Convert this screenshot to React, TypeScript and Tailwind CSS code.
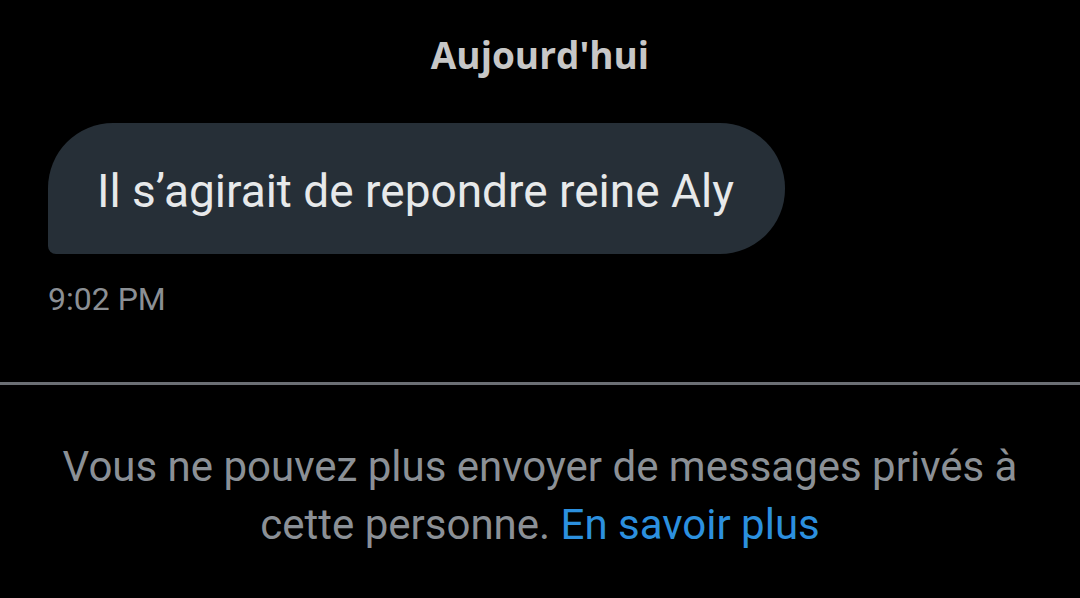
export default function App() {
  return (
    <div
      className="w-[1080px] h-[598px] bg-black overflow-hidden flex flex-col"
      style={{ fontFamily: "Roboto, 'Noto Sans', sans-serif" }}
    >
      {/* day separator */}
      <div className="pt-[33px] flex justify-center">
        <span
          className="text-[37px] font-bold leading-[44px] text-[#c7c7c7]"
          style={{ fontFamily: "'Open Sans', sans-serif" }}
        >
          Aujourd'hui
        </span>
      </div>

      {/* received message */}
      <div className="pl-12 pt-[46px] flex flex-col items-start">
        <div className="h-[131px] pl-[49px] pr-[51px] pt-[4px] flex items-center bg-[#262f37] rounded-[65px] rounded-bl-[8px]">
          <span className="text-[46px] text-[#e7e9ea] leading-none">
            Il s’agirait de repondre reine Aly
          </span>
        </div>
        <span className="mt-[26px] text-[32px] leading-[38px] text-[#8b8f94]">9:02 PM</span>
      </div>

      {/* conversation closed notice */}
      <div className="mt-[64px] h-[3px] bg-[#6b6f74]" />
      <p className="mt-[53px] px-6 text-center text-[42px] leading-[58px] text-[#8b9096]">
        Vous ne pouvez plus envoyer de messages privés à
        <br />
        cette personne. <span className="text-[#2c90df]">En savoir plus</span>
      </p>
    </div>
  );
}
